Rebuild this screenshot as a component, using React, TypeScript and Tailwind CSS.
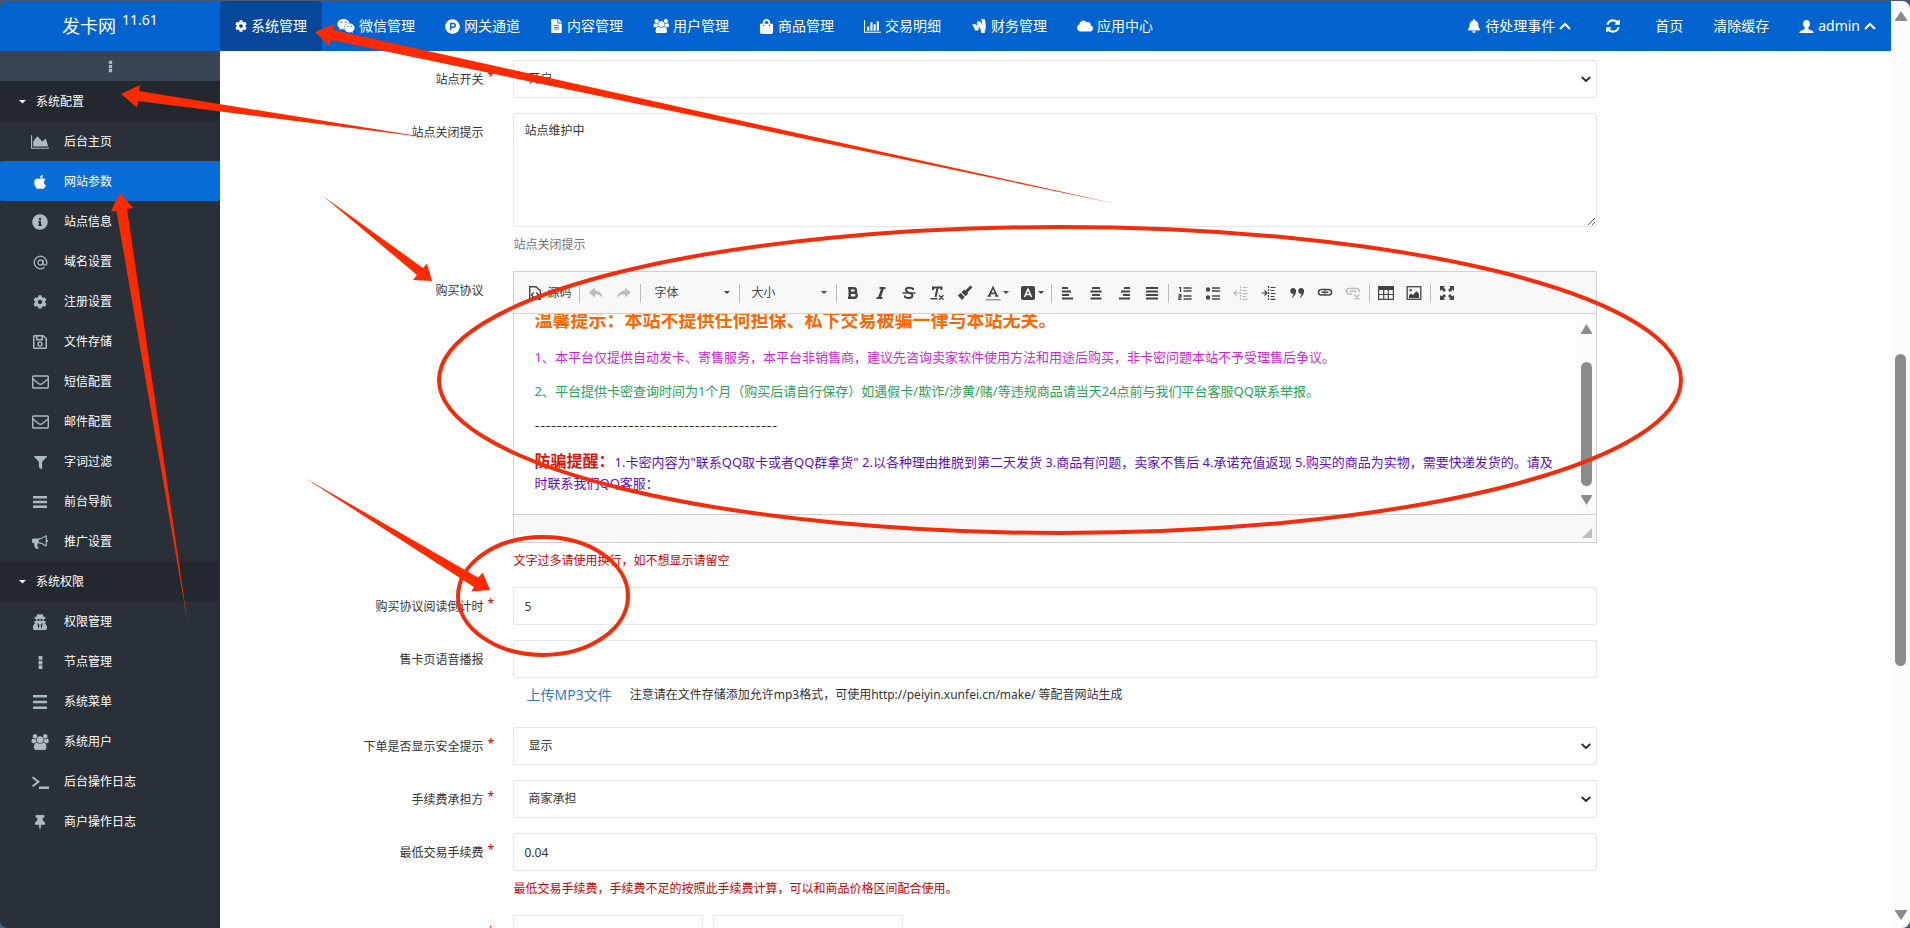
import type { ReactNode } from "react";
import { AtSign } from "lucide-react";
import {
  FaApple,
  FaBell,
  FaCloud,
  FaCog,
  FaFileAlt,
  FaFilter,
  FaGoogleWallet,
  FaInfoCircle,
  FaProductHunt,
  FaRegSave,
  FaShoppingBag,
  FaThumbtack,
  FaUserSecret,
  FaWeixin,
} from "react-icons/fa";

function Glyph({ box, d, className }: { box: string; d: string; className?: string }) {
  return (
    <svg viewBox={box} fill="currentColor" className={className} aria-hidden="true">
      <path d={d} />
    </svg>
  );
}

const USERS =
  "M657 896q-162 5-265 128h-134q-82 0-138-40.5t-56-118.5q0-353 124-353 6 0 43.5 21t97.5 42.5 119 21.5q67 0 133-23-5 37-5 66 0 139 81 256zm1071 637q0 120-73 189.5t-194 69.5h-874q-121 0-194-69.5t-73-189.5q0-53 3.5-103.5t14-109 26.5-108.5 43-97.5 62-81 85.5-53.5 111.5-20q10 0 43 21.5t73 48 107 48 135 21.5 135-21.5 107-48 73-48 43-21.5q61 0 111.5 20t85.5 53.5 62 81 43 97.5 26.5 108.5 14 109 3.5 103.5zm-1024-1277q0 106-75 181t-181 75-181-75-75-181 75-181 181-75 181 75 75 181zm704 384q0 159-112.5 271.5t-271.5 112.5-271.5-112.5-112.5-271.5 112.5-271.5 271.5-112.5 271.5 112.5 112.5 271.5zm576 225q0 78-56 118.5t-138 40.5h-134q-103-123-265-128 81-117 81-256 0-29-5-66 66 23 133 23 59 0 119-21.5t97.5-42.5 43.5-21q124 0 124 353zm-128-609q0 106-75 181t-181 75-181-75-75-181 75-181 181-75 181 75 75 181z";
const BAR_CHART =
  "M640 896v512h-256v-512h256zm384-512v1024h-256v-1024h256zm1024 1152v128h-2048v-1536h128v1408h1920zm-640-896v768h-256v-768h256zm384-384v1152h-256v-1152h256z";
const AREA_CHART =
  "M2048 1536v128h-2048v-1536h128v1408h1920zm-384-1024l256 896h-1664v-576l448-576 576 576z";
const REFRESH =
  "M1639 1056q0 5-1 7-64 268-268 434.5t-478 166.5q-146 0-282.5-55t-243.5-157l-129 129q-19 19-45 19t-45-19-19-45v-448q0-26 19-45t45-19h448q26 0 45 19t19 45-19 45l-137 137q71 66 161 102t187 36q134 0 250-65t186-179q11-17 53-117 8-23 30-23h192q13 0 22.5 9.5t9.5 22.5zm25-800v448q0 26-19 45t-45 19h-448q-26 0-45-19t-19-45 19-45l138-138q-148-137-349-137-134 0-250 65t-186 179q-11 17-53 117-8 23-30 23h-199q-13 0-22.5-9.5t-9.5-22.5v-7q65-268 270-434.5t480-166.5q146 0 284 55.5t245 156.5l130-129q19-19 45-19t45 19 19 45z";
const BULLHORN =
  "M1664 640q53 0 90.5 37.5t37.5 90.5-37.5 90.5-90.5 37.5v384q0 52-38 90t-90 38q-417-347-812-380-58 19-91 66t-31 100.5 40 92.5q-20 33-23 65.5t6 58 33.5 55 48 50 61.5 50.5q-29 58-111.5 83t-168.5 11.5-132-55.5q-7-23-29.5-87.5t-32-94.5-23-89-15-101 3.5-98.5 22-110.5h-122q-66 0-113-47t-47-113v-192q0-66 47-113t113-47h480q435 0 896-384 52 0 90 38t38 90v384zm-128 604v-954q-394 302-768 343v270q377 42 768 341z";
const USER =
  "M8 1c2.300 0 3.700 1.700 3.700 4 0 1.600-.7 3.200-1.700 4v1.300c0 .5.300.8.800 1l3.200 1.300c1 .4 1.500 1 1.500 2.400H.500c0-1.400.5-2 1.500-2.400l3.200-1.300c.5-.2.800-.5.800-1V9c-1-.8-1.700-2.400-1.700-4 0-2.300 1.400-4 3.700-4z";
const BARS = "M1 2h14v2.500H1zM1 6.800h14v2.500H1zM1 11.600h14v2.500H1z";
const MENU = "M1 1h14v2.500H1zM1 6.800h14v2.500H1zM1 12.600h14v2.500H1z";
const DOTS = "M6 1h4v4H6zM6 6h4v4H6zM6 11h4v4H6z";
const TERMINAL = "M1.200 1.500L8 6.800 1.200 12 0 10.500 4.800 6.800 0 3zM7 11.500h10V14H7z";

const topNav: { label: string; icon: ReactNode }[] = [
  { label: "系统管理", icon: <FaCog className="w-3" /> },
  { label: "微信管理", icon: <FaWeixin className="size-[18px]" /> },
  { label: "网关通道", icon: <FaProductHunt className="size-[15px]" /> },
  { label: "内容管理", icon: <FaFileAlt className="w-[13px]" /> },
  { label: "用户管理", icon: <Glyph box="0 0 1984 1792" d={USERS} className="w-4" /> },
  { label: "商品管理", icon: <FaShoppingBag className="size-[15px]" /> },
  { label: "交易明细", icon: <Glyph box="0 0 2048 1792" d={BAR_CHART} className="w-[17px]" /> },
  { label: "财务管理", icon: <FaGoogleWallet className="size-4" /> },
  { label: "应用中心", icon: <FaCloud className="size-4" /> },
];

const envelope = (
  <svg viewBox="0 0 17 14" fill="none" stroke="currentColor" strokeWidth="1.400" className="w-[17px]">
    <rect x="0.700" y="1" width="15.600" height="12" rx="1" />
    <path d="M1 4l5.500 4.500c1.200 1 2.800 1 4 0L16 4" />
  </svg>
);

const sideMenu: { title: string; items: { label: string; icon: ReactNode }[] }[] = [
  {
    title: "系统配置",
    items: [
      { label: "后台主页", icon: <Glyph box="0 0 2048 1792" d={AREA_CHART} className="h-4" /> },
      { label: "网站参数", icon: <FaApple className="size-4" /> },
      { label: "站点信息", icon: <FaInfoCircle className="size-4" /> },
      { label: "域名设置", icon: <AtSign className="size-[15px]" /> },
      { label: "注册设置", icon: <FaCog className="size-[14px]" /> },
      { label: "文件存储", icon: <FaRegSave className="size-4" /> },
      { label: "短信配置", icon: envelope },
      { label: "邮件配置", icon: envelope },
      { label: "字词过滤", icon: <FaFilter className="size-[13px]" /> },
      { label: "前台导航", icon: <Glyph box="0 0 16 16" d={BARS} className="size-4" /> },
      { label: "推广设置", icon: <Glyph box="0 0 1792 1792" d={BULLHORN} className="size-4" /> },
    ],
  },
  {
    title: "系统权限",
    items: [
      { label: "权限管理", icon: <FaUserSecret className="size-4" /> },
      { label: "节点管理", icon: <Glyph box="0 0 16 16" d={DOTS} className="size-[15px]" /> },
      { label: "系统菜单", icon: <Glyph box="0 0 16 16" d={MENU} className="size-4" /> },
      { label: "系统用户", icon: <Glyph box="0 0 1984 1792" d={USERS} className="h-4" /> },
      { label: "后台操作日志", icon: <Glyph box="0 0 17 15" d={TERMINAL} className="w-[17px]" /> },
      { label: "商户操作日志", icon: <FaThumbtack className="size-[14px]" /> },
    ],
  },
];

function ChevronUp() {
  return (
    <svg viewBox="0 0 12 8" fill="none" stroke="currentColor" strokeWidth="2" className="w-3">
      <path d="M1 7l5-5 5 5" />
    </svg>
  );
}

function Header() {
  return (
    <header className="flex h-[50px] shrink-0 items-stretch bg-[#0063d0] text-sm text-white">
      <a href="#" className="flex w-[220px] items-center justify-center text-lg">
        发卡网
        <span className="mb-3 ml-1.5 text-sm">11.61</span>
      </a>
      <nav className="flex items-stretch">
        {topNav.map((item, i) => (
          <a
            key={item.label}
            href="#"
            className={`flex items-center gap-1 rounded px-[15px] ${i === 0 ? "bg-[#064799]" : ""}`}
          >
            {item.icon}
            {item.label}
          </a>
        ))}
      </nav>
      <div className="ml-auto flex items-center gap-[30px] pr-[15px]">
        <button className="flex items-center gap-1">
          <FaBell className="size-[14px]" />
          待处理事件
          <ChevronUp />
        </button>
        <button aria-label="刷新" className="mx-1">
          <Glyph box="0 0 1792 1792" d={REFRESH} className="size-4" />
        </button>
        <a href="#">首页</a>
        <a href="#">清除缓存</a>
        <button className="flex items-center gap-1">
          <Glyph box="0 0 16 16" d={USER} className="size-[15px]" />
          admin
          <ChevronUp />
        </button>
      </div>
    </header>
  );
}

function Sidebar() {
  return (
    <aside className="w-[220px] shrink-0 bg-[#293038] text-xs text-white">
      <button aria-label="折叠菜单" className="flex h-[30px] w-full items-center justify-center bg-[#394555] text-[#aeb9c2]">
        <Glyph box="0 0 16 16" d={DOTS} className="size-[13px]" />
      </button>
      {sideMenu.map((group) => (
        <section key={group.title}>
          <h2 className="flex h-10 items-center gap-2.5 bg-[#22282e] pt-0.5 pl-[19px]">
            <Glyph box="0 0 8 4" d="M0 0h8L4 4z" className="w-[7px]" />
            {group.title}
          </h2>
          <ul>
            {group.items.map((item) => {
              const active = item.label === "网站参数";
              return (
                <li key={item.label}>
                  <a
                    href="#"
                    className={`flex h-10 items-center gap-2 rounded-xs pt-0.5 pl-6 ${active ? "bg-[#096dd9]" : ""}`}
                  >
                    <span className={`flex w-8 justify-center ${active ? "text-white" : "text-[#aeb9c2]"}`}>
                      {item.icon}
                    </span>
                    {item.label}
                  </a>
                </li>
              );
            })}
          </ul>
        </section>
      ))}
    </aside>
  );
}

function Row({
  label,
  htmlFor,
  required,
  children,
}: {
  label: string;
  htmlFor: string;
  required?: boolean;
  children: ReactNode;
}) {
  return (
    <div className="mb-[15px] flex">
      <label htmlFor={htmlFor} className="flex h-[38px] w-1/6 shrink-0 items-center justify-end pt-0.5">
        {label}
        <span className="w-[15px] pb-1.5 pl-1 text-[#c00]">{required ? "*" : ""}</span>
      </label>
      <div className="w-2/3 px-[15px]">{children}</div>
    </div>
  );
}

const field = "block h-[38px] w-full rounded-xs border border-[#e6e6e6] bg-white px-2.5 text-xs text-[#333]";

function Select({ id, options }: { id: string; options: string[] }) {
  return (
    <div className="relative">
      <select
        id={id}
        className="block h-[38px] w-full appearance-none rounded-xs border border-[#e6e6e6] bg-white px-[14px] text-xs text-[#333]"
      >
        {options.map((o) => (
          <option key={o}>{o}</option>
        ))}
      </select>
      <svg
        viewBox="0 0 10 6"
        fill="none"
        stroke="#333"
        strokeWidth="2"
        className="pointer-events-none absolute top-4 right-1.5 w-2.5"
      >
        <path d="M.700 1L5 5l4.300-4" />
      </svg>
    </div>
  );
}

function Help({ children, red }: { children: ReactNode; red?: boolean }) {
  return <p className={`mt-1.5 mb-[-1px] leading-6 ${red ? "text-[#c00]" : "text-[#737373]"}`}>{children}</p>;
}

function Tool({ label, children, faded, wide }: { label: string; children: ReactNode; faded?: boolean; wide?: boolean }) {
  return (
    <button
      type="button"
      aria-label={label}
      className={`flex h-7 items-center justify-center gap-0.5 ${wide ? "w-[35px]" : "w-7"} ${faded ? "text-[#bcbcbc]" : "text-[#444]"}`}
    >
      {children}
    </button>
  );
}

function Svg({ children }: { children: ReactNode }) {
  return (
    <svg viewBox="0 0 16 16" fill="none" stroke="currentColor" strokeWidth="2" className="size-4 shrink-0">
      {children}
    </svg>
  );
}

function Sep() {
  return <span className="mx-0.5 h-[18px] w-px bg-[#bcbcbc]" />;
}

function Caret() {
  return <Glyph box="0 0 6 3" d="M0 0h6L3 3z" className="w-1.5 shrink-0" />;
}

function Toolbar() {
  return (
    <div className="flex h-[42px] items-center overflow-hidden border-b border-[#d1d1d1] bg-[#f8f8f8] px-2 text-[#444]">
      <button type="button" className="flex h-7 w-[55px] items-center gap-1 pl-[5px]">
        <Svg>
          <path strokeWidth="1.400" d="M5 14.300H2.700V1.700H9l4.300 4v8.600H11" />
          <path strokeWidth="1.400" d="M6.700 7.500L4.500 10l2.200 2.500M9.300 7.500l2.200 2.500-2.200 2.500" />
        </Svg>
        源码
      </button>
      <Sep />
      <Tool label="撤销" faded>
        <Svg><path fill="currentColor" stroke="none" d="M1 7.500L7 2.500v3.200c4 0 7 2 7.800 7.300-2-2.800-4.300-3.700-7.800-3.700v3.200z" /></Svg>
      </Tool>
      <Tool label="重做" faded>
        <Svg><path fill="currentColor" stroke="none" d="M15 7.500L9 2.500v3.200c-4 0-7 2-7.800 7.300 2-2.800 4.300-3.700 7.800-3.700v3.200z" /></Svg>
      </Tool>
      <Sep />
      <button type="button" className="flex h-7 w-[94px] items-center justify-between pr-[7px] pl-[11px]">
        字体
        <Caret />
      </button>
      <Sep />
      <button type="button" className="flex h-7 w-[92px] items-center justify-between pr-[7px] pl-[9px]">
        大小
        <Caret />
      </button>
      <Sep />
      <Tool label="加粗">
        <Svg><path strokeWidth="2.400" d="M4.700 3.200h4q2.300 0 2.300 2.200t-2.300 2.300h-4h4.500q2.500 0 2.500 2.500t-2.500 2.500H4.700zM3 3.200h2M3 12.800h2" /></Svg>
      </Tool>
      <Tool label="倾斜">
        <Svg><path d="M6.500 3h6M3.500 13h6" strokeWidth="1.800" /><path d="M9.700 3l-3.400 10" strokeWidth="2.600" /></Svg>
      </Tool>
      <Tool label="删除线">
        <Svg><path d="M12 5V3.600Q10 2.800 8 2.800q-3 0-3 2.200 0 1.700 3 2.600 3.500 1 3.500 3 0 2.400-3.500 2.400-2.500 0-4-1V10.500" /><path strokeWidth="1.400" d="M1.500 8h13" /></Svg>
      </Tool>
      <Tool label="清除格式">
        <Svg><path d="M4 5V2.500h8.500V5M8.700 2.500L6.500 12" /><path strokeWidth="1.400" d="M1.500 13.700h7M10 10.200l4.500 4.500M14.500 10.200L10 14.700" /></Svg>
      </Tool>
      <Tool label="复制格式">
        <Svg><path fill="currentColor" stroke="none" d="M13.500.5l2 1.800-5 5.200.8.900-2.800 2.900-4-4L7.300 4.500l1 .9zM3.700 8l4 4L5 15 .8 10.500z" /></Svg>
      </Tool>
      <Tool label="文本颜色" wide>
        <Svg><path d="M4 11l4-8.500L12 11M5.500 8.300h5M2.500 11h3.500M10 11h3.500" strokeWidth="1.700" /><path stroke="#999" strokeWidth="1.600" d="M.5 14.700h15" /></Svg>
        <Caret />
      </Tool>
      <Tool label="背景颜色" wide>
        <Svg><rect x="1" y="1" width="14" height="14" rx="2" fill="currentColor" stroke="none" /><path stroke="#fff" strokeWidth="1.500" d="M4.500 12L8 4l3.500 8M5.500 9.500h5" /></Svg>
        <Caret />
      </Tool>
      <Sep />
      <Tool label="左对齐"><Svg><path d="M2 3h6M2 6.500h9M2 10h7M2 13.500h11" /></Svg></Tool>
      <Tool label="居中"><Svg><path d="M4 3h8M2.500 6.500h11M4 10h8M2.500 13.500h11" /></Svg></Tool>
      <Tool label="右对齐"><Svg><path d="M8 3h6M5 6.500h9M7 10h7M3 13.500h11" /></Svg></Tool>
      <Tool label="两端对齐"><Svg><path d="M2 3h12M2 6.500h12M2 10h12M2 13.500h12" /></Svg></Tool>
      <Sep />
      <Tool label="编号列表">
        <Svg><path strokeWidth="1.300" d="M6.500 3h8M6.500 6h8M6.500 11h8M6.500 14h8M2 2.700h1.500V7M1.500 10h2.500v2H2v2.300h2.500" /></Svg>
      </Tool>
      <Tool label="项目列表">
        <Svg><path strokeWidth="1.300" d="M7 3h8M7 6h8M7 11h8M7 14h8" /><circle cx="3" cy="4.500" r="1.200" /><circle cx="3" cy="12.500" r="1.200" /></Svg>
      </Tool>
      <Tool label="减少缩进" faded>
        <Svg><path strokeWidth="1.200" d="M7.500 1v14" strokeDasharray="2 1" /><path strokeWidth="1.200" d="M9.500 2.500h5M9.500 5.500h4M9.500 8.500h5M9.500 11.500h4M9.500 14.300h5M1.500 8h5M3.500 5.500L1 8l2.500 2.500" /></Svg>
      </Tool>
      <Tool label="增加缩进">
        <Svg><path strokeWidth="1.200" d="M7.500 1v14" strokeDasharray="2 1" /><path strokeWidth="1.200" d="M9.500 2.500h5M9.500 5.500h4M9.500 8.500h5M9.500 11.500h4M9.500 14.300h5M.5 8h5M3.500 5.500L6 8l-2.500 2.500" /></Svg>
      </Tool>
      <Tool label="引用">
        <Svg><path fill="currentColor" stroke="none" d="M4 3a2.800 2.800 0 0 1 3 3c0 3-1.500 5.500-4.500 7 1.200-1.600 1.900-2.800 2-4.200A2.900 2.900 0 1 1 4 3zm8 0a2.800 2.800 0 0 1 3 3c0 3-1.500 5.500-4.500 7 1.200-1.600 1.900-2.800 2-4.200A2.900 2.900 0 1 1 12 3z" /></Svg>
      </Tool>
      <Tool label="超链接">
        <Svg><path strokeWidth="1.500" d="M8 4.500H4.300a2.800 2.800 0 0 0 0 5.600H8V8.500M8 10.100h3.700a2.800 2.800 0 0 0 0-5.600H8v1.600M4.500 7.300h7" /></Svg>
      </Tool>
      <Tool label="取消超链接" faded>
        <Svg><path strokeWidth="1.500" d="M8.500 3.500H4.300a2.800 2.800 0 0 0 0 5.600H7M8.500 3.500h3.200a2.800 2.800 0 0 1 2.500 4M4.500 6.300h7M9.500 9.500l5 5M14.500 9.500l-5 5" /></Svg>
      </Tool>
      <Sep />
      <Tool label="表格">
        <Svg><path fill="currentColor" stroke="none" d="M0 1h16v4H0z" /><path strokeWidth="1.200" d="M.6 2v12.400h14.800V2M1 9.500h14M5.700 5v9.400M10.300 5v9.400" /></Svg>
      </Tool>
      <Tool label="图像">
        <Svg><rect x="1.200" y="1.700" width="13.600" height="12.600" strokeWidth="1.300" /><path fill="currentColor" stroke="none" d="M3 13V10.500l2-2 2 1.500 3.500-4L13 9v4zM3.500 4h2.300v2.300H3.500z" /></Svg>
      </Tool>
      <Sep />
      <Tool label="全屏">
        <Svg><path fill="currentColor" stroke="none" d="M1 1h5L4.500 2.500 7 5 5 7 2.500 4.500 1 6zM15 1v5l-1.500-1.500L11 7 9 5l2.500-2.500L10 1zM1 15v-5l1.500 1.500L5 9l2 2-2.500 2.500L6 15zM15 15h-5l1.500-1.500L9 11l2-2 2.500 2.500L15 10z" /></Svg>
      </Tool>
    </div>
  );
}

function Editor() {
  return (
    <div className="border border-[#d1d1d1]">
      <Toolbar />
      <div className="flex h-[200px] overflow-hidden">
        <div
          id="agreement"
          role="textbox"
          contentEditable
          suppressContentEditableWarning
          className="flex flex-1 flex-col justify-end gap-[13px] px-5 pb-5 text-[13px] leading-[21px] text-[#333]"
        >
          <p className="text-lg leading-7 font-bold text-[#f60]">
            温馨提示：本站不提供任何担保、私下交易被骗一律与本站无关。
          </p>
          <p className="text-[#d21fd8]">
            1、本平台仅提供自动发卡、寄售服务，本平台非销售商，建议先咨询卖家软件使用方法和用途后购买，非卡密问题本站不予受理售后争议。
          </p>
          <p className="text-[#27a35a]">
            2、平台提供卡密查询时间为1个月（购买后请自行保存）如遇假卡/欺诈/涉黄/赌/等违规商品请当天24点前与我们平台客服QQ联系举报。
          </p>
          <p className="font-['Inter'] text-xs leading-[21px]">--------------------------------------------</p>
          <p className="text-[#5a0fc0]">
            <strong className="text-base leading-6 font-bold text-[#d8140f]">防骗提醒：</strong>
            1.卡密内容为"联系QQ取卡或者QQ群拿货" 2.以各种理由推脱到第二天发货 3.商品有问题，卖家不售后 4.承诺充值返现 5.购买的商品为实物，需要快递发货的。请及时联系我们QQ客服：
          </p>
        </div>
        <div className="flex w-[19px] flex-col items-center bg-[#fcfcfc] pt-2.5 pb-[9px] text-[#8b8b8b]">
          <Glyph box="0 0 11 10" d="M5.500 0l5.500 9v1H0V9z" className="w-[11px]" />
          <span className="mt-7 h-[124px] w-[11px] rounded-full bg-[#8b8b8b]" />
          <Glyph box="0 0 11 10" d="M5.500 10L0 1V0h11v1z" className="mt-auto w-[11px]" />
        </div>
      </div>
      <div className="flex h-7 items-end justify-end border-t border-[#d1d1d1] bg-[#f8f8f8] p-1 text-[#bcbcbc]">
        <Glyph box="0 0 10 10" d="M10 0v10H0z" className="size-2.5" />
      </div>
    </div>
  );
}

function SettingsForm() {
  return (
    <form className="min-w-0 flex-1 overflow-hidden bg-white pt-[9px] text-xs text-[#333]">
      <Row label="站点开关" htmlFor="site-status" required>
        <Select id="site-status" options={["开启", "关闭"]} />
      </Row>
      <Row label="站点关闭提示" htmlFor="close-tip">
        <textarea
          id="close-tip"
          defaultValue="站点维护中"
          className="block h-[114px] w-full rounded-xs border border-[#e6e6e6] px-2.5 py-[7px] leading-5"
        />
        <Help>站点关闭提示</Help>
      </Row>
      <Row label="购买协议" htmlFor="agreement">
        <Editor />
        <Help red>文字过多请使用换行，如不想显示请留空</Help>
      </Row>
      <Row label="购买协议阅读倒计时" htmlFor="countdown" required>
        <input id="countdown" defaultValue="5" className={field} />
      </Row>
      <Row label="售卡页语音播报" htmlFor="voice">
        <input id="voice" className={field} />
        <div className="flex h-[34px] items-center gap-[18px] pl-[13px]">
          <a href="#" className="text-sm text-[#337ab7]">上传MP3文件</a>
          <span>注意请在文件存储添加允许mp3格式，可使用http://peiyin.xunfei.cn/make/ 等配音网站生成</span>
        </div>
      </Row>
      <Row label="下单是否显示安全提示" htmlFor="safe-tip" required>
        <Select id="safe-tip" options={["显示", "不显示"]} />
      </Row>
      <Row label="手续费承担方" htmlFor="fee-payer" required>
        <Select id="fee-payer" options={["商家承担", "买家承担"]} />
      </Row>
      <Row label="最低交易手续费" htmlFor="min-fee" required>
        <input id="min-fee" defaultValue="0.04" className={field} />
        <Help red>最低交易手续费，手续费不足的按照此手续费计算，可以和商品价格区间配合使用。</Help>
      </Row>
      <Row label="" htmlFor="price-min" required>
        <div className="flex gap-2.5">
          <input id="price-min" className="h-[38px] w-[190px] rounded-xs border border-[#e6e6e6] px-2.5" />
          <input aria-label="最高价格" className="h-[38px] w-[190px] rounded-xs border border-[#e6e6e6] px-2.5" />
        </div>
      </Row>
    </form>
  );
}

function PageScrollbar() {
  return (
    <div className="flex w-[19px] shrink-0 flex-col items-center bg-[#fcfcfc] pt-2.5 pb-2 text-[#8b8b8b]">
      <Glyph box="0 0 12 10" d="M6 0l6 9v1H0V9z" className="w-3" />
      <div className="flex w-[11px] flex-1 flex-col">
        <span className="flex-[333]" />
        <span className="flex-[312] rounded-full bg-[#8b8b8b]" />
        <span className="flex-[244]" />
      </div>
      <Glyph box="0 0 12 10" d="M6 10L0 1V0h12v1z" className="w-3" />
    </div>
  );
}

// Red marker strokes drawn on top of the page
function Markers() {
  return (
    <svg viewBox="0 0 1910 928" className="pointer-events-none absolute inset-0 size-full" aria-hidden="true">
      <g fill="#ff2a00">
        <path d="M315 32L334 24L333 30L1117 204L331 40L329 46z" />
        <path d="M121 94L140 85L139 91L430 138L138 101L137 107.500z" />
        <path d="M119.500 193L133.500 208L127 209L188 625L116.500 211L111 211.500z" />
        <path d="M432 281L427 263.500L423 268L323 196L417 275L413 280z" />
        <path d="M490 590L482.700 572.700L478 577.500L305 478L474 587L471.300 591.500z" />
      </g>
      <g fill="none" stroke="#f52c0c" strokeWidth="4">
        <ellipse cx="1060" cy="380" rx="621" ry="153" />
        <ellipse cx="543" cy="596" rx="85" ry="59" />
      </g>
    </svg>
  );
}

export default function App() {
  return (
    <div className="relative h-screen overflow-hidden bg-[#4a5a70] pt-px font-['Noto_Sans','Noto_Sans_CJK_SC',sans-serif]">
      <div className="flex h-full overflow-hidden rounded-lg">
        <div className="flex min-w-0 flex-1 flex-col">
          <Header />
          <div className="flex min-h-0 flex-1">
            <Sidebar />
            <SettingsForm />
          </div>
        </div>
        <PageScrollbar />
      </div>
      <Markers />
    </div>
  );
}
